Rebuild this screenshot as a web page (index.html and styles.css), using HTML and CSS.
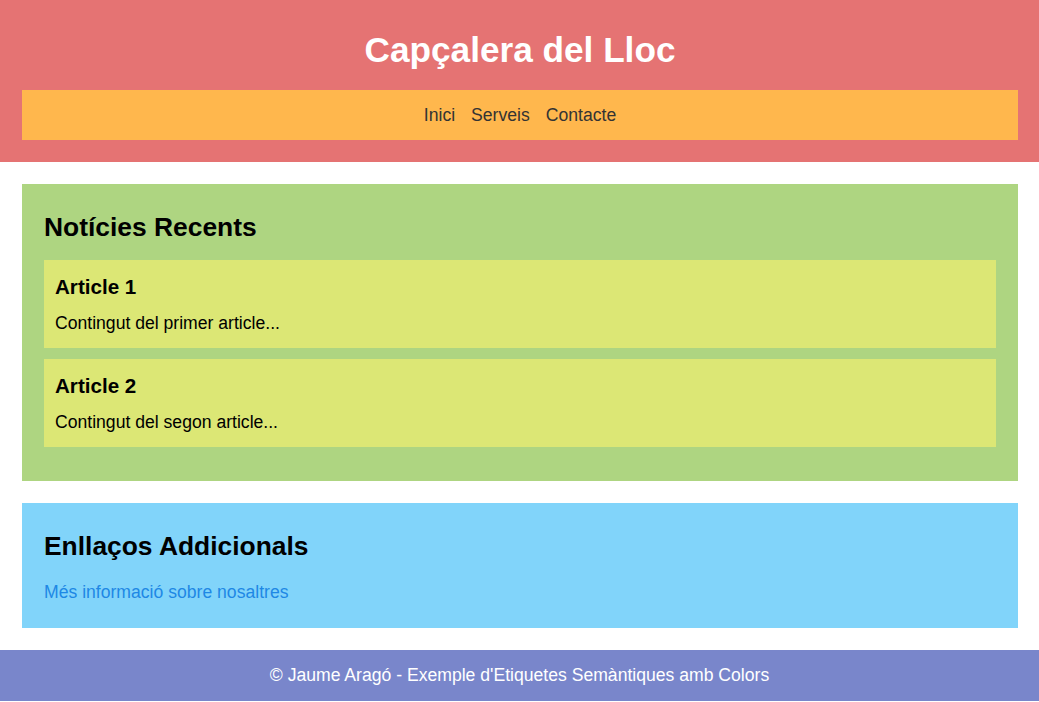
FILE: index.html
```html
<!DOCTYPE html>
<html lang="ca">
<head>
<meta charset="utf-8">
<title>Etiquetes Semàntiques</title>
<link rel="stylesheet" href="styles.css">
</head>
<body>
<header class="site-header">
  <h1 class="site-title">Capçalera del Lloc</h1>
  <nav class="site-nav">
    <a href="#" class="nav-link">Inici</a>
    <a href="#" class="nav-link">Serveis</a>
    <a href="#" class="nav-link">Contacte</a>
  </nav>
</header>
<main class="content">
  <section class="news">
    <h2 class="block-title">Notícies Recents</h2>
    <article class="post">
      <h3 class="post-title">Article 1</h3>
      <p class="post-text">Contingut del primer article...</p>
    </article>
    <article class="post">
      <h3 class="post-title">Article 2</h3>
      <p class="post-text">Contingut del segon article...</p>
    </article>
  </section>
  <aside class="extra">
    <h2 class="block-title">Enllaços Addicionals</h2>
    <p class="extra-text"><a href="#" class="extra-link">Més informació sobre nosaltres</a></p>
  </aside>
</main>
<footer class="site-footer">
  <p class="footer-text">© Jaume Aragó - Exemple d'Etiquetes Semàntiques amb Colors</p>
</footer>
</body>
</html>
```

FILE: styles.css
```css
html, body {
  margin: 0;
  padding: 0;
  background: #ffffff;
}

body {
  font-family: "Liberation Sans", Arial, sans-serif;
  font-size: 17.6px;
  line-height: 1.6;
  color: #000;
}

.site-header {
  background: #e57373;
  padding: 22px 21px 22px 22px;
  text-align: center;
}

.site-title {
  margin: 0 0 12px;
  font-size: 35.2px;
  font-weight: bold;
  color: #ffffff;
}

.site-nav {
  background: #ffb74d;
  padding: 11px;
  display: flex;
  justify-content: center;
  gap: 16px;
}

.nav-link {
  color: #333333;
  text-decoration: none;
}

.content {
  padding: 22px 21px 22px 22px;
  display: flex;
  flex-direction: column;
  gap: 22px;
}

.news {
  background: #aed581;
  padding: 22px 22px 22.6px;
}

.extra {
  background: #81d4fa;
  padding: 22px;
}

.block-title {
  margin: 0 0 11px;
  font-size: 26.4px;
  font-weight: bold;
}

.post {
  background: #dce775;
  padding: 11px;
  margin-bottom: 11px;
}

.post-title {
  margin: 0 0 5.3px;
  font-size: 20.6px;
  font-weight: bold;
}

.post-text,
.extra-text {
  margin: 0;
}

.extra-link {
  color: #1e88e5;
  text-decoration: none;
}

.site-footer {
  background: #7986cb;
  color: #ffffff;
  text-align: center;
  padding: 11px;
}

.footer-text {
  margin: 0;
}
```
